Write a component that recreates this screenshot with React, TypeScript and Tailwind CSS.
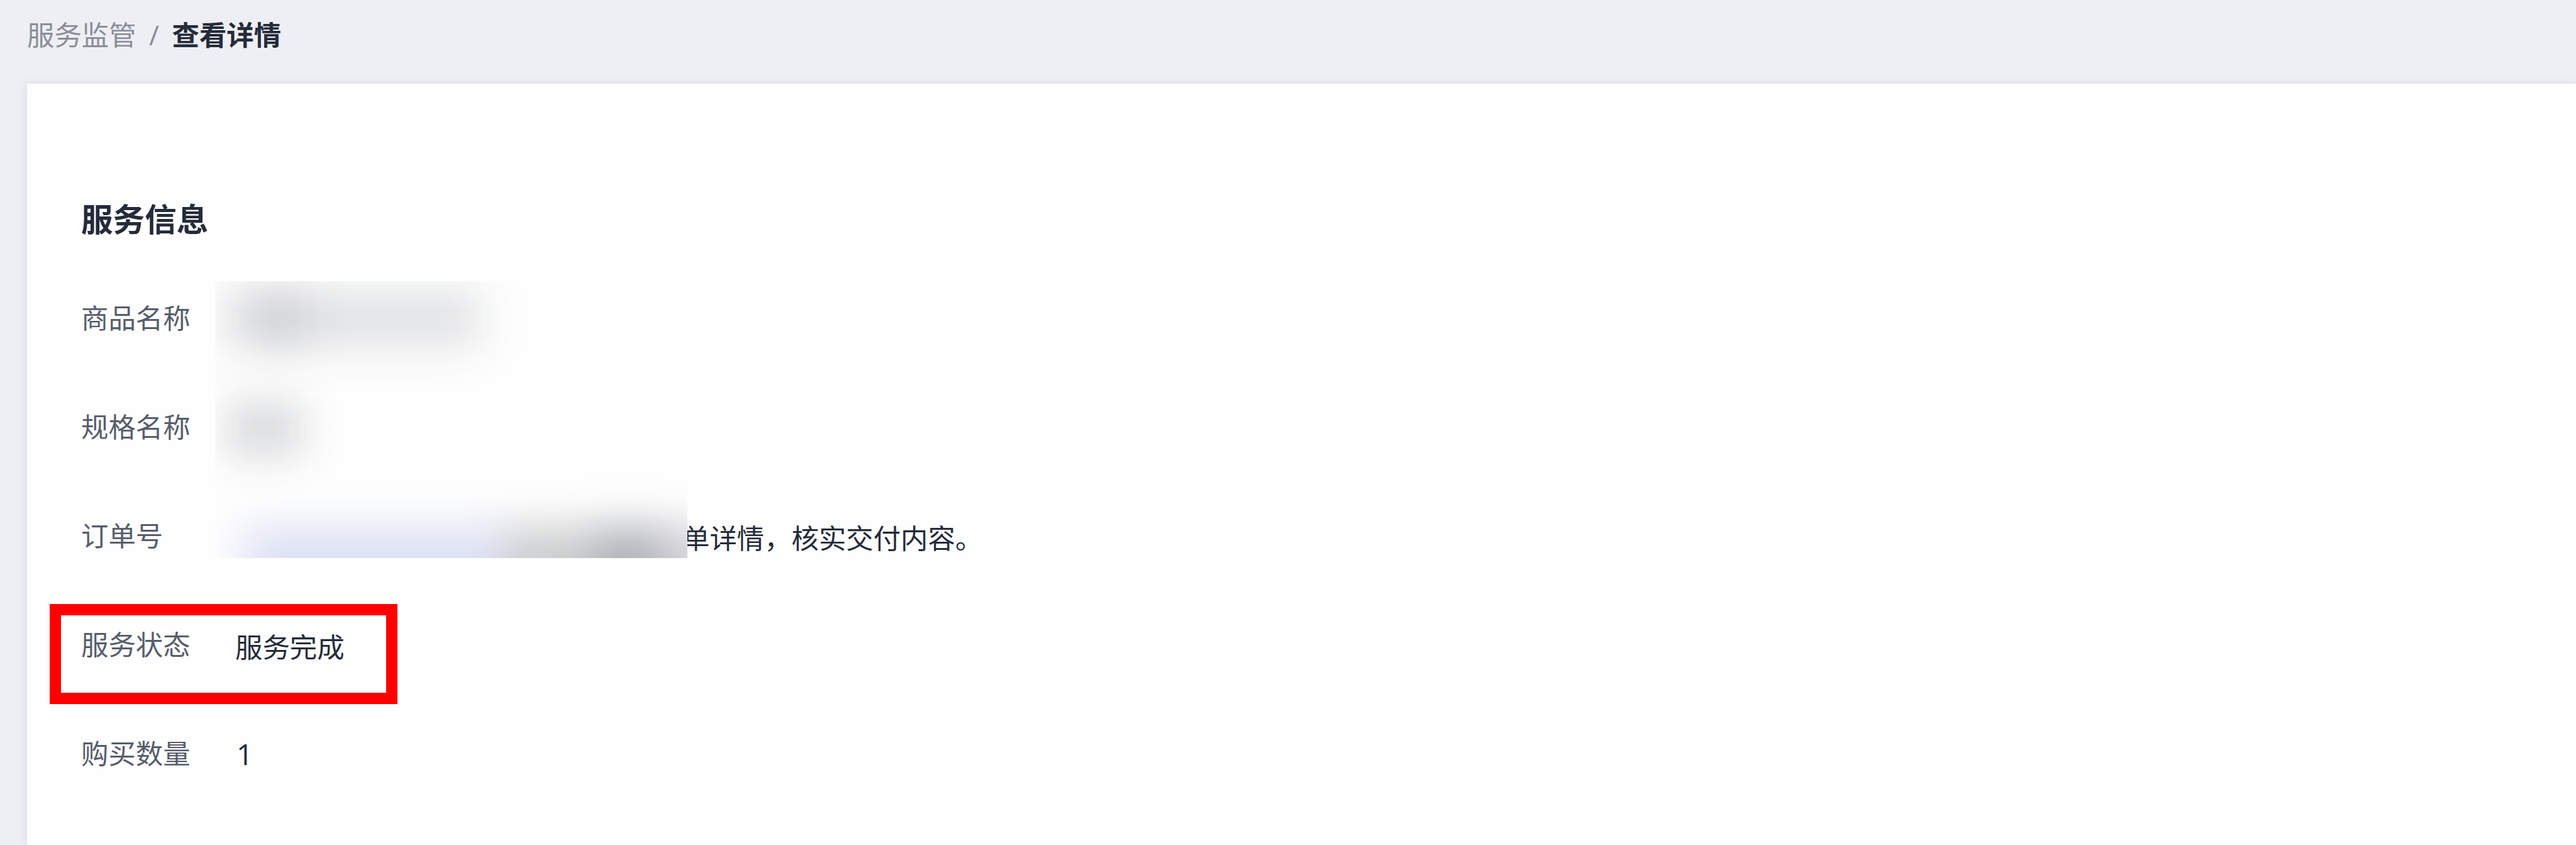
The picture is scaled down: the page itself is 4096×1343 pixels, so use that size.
type RowProps = {
  label: string
  value?: string
  valueClass?: string
}

const rows: RowProps[] = [
  { label: '商品名称' },
  { label: '规格名称' },
  { label: '订单号', value: '单详情，核实交付内容。', valueClass: 'pt-[4px] pl-[711px]' },
  { label: '服务状态', value: '服务完成', valueClass: 'pt-[4px]' },
  { label: '购买数量', value: '1', valueClass: 'pl-[2px] text-[46px]' },
]

function Breadcrumb() {
  return (
    <nav className="flex h-[133px] items-start pt-[26px] pl-[43px] text-[43.4px] leading-[60px]">
      <span className="text-[#8a8e99]">服务监管</span>
      <span className="w-[57px] text-center text-[#8a8e99]">/</span>
      <span className="font-bold text-[#252b3a]">查看详情</span>
    </nav>
  )
}

// hides the private values of the first three rows
function Mosaic() {
  return (
    <div className="absolute top-[314px] left-[299px] flex h-[440px] w-[751px] flex-col overflow-hidden bg-[#fefefe]">
      <div className="flex h-[189px] shrink-0 pt-[12px] pl-[12px] blur-[34px]">
        <div className="h-[94px] w-[48px] bg-[#1a2030]/12" />
        <div className="h-[94px] w-[86px] bg-[#1a2030]/21" />
        <div className="h-[94px] w-[276px] bg-[#1a2030]/12" />
      </div>
      <div className="flex h-[200px] shrink-0 pl-[16px] blur-[31px]">
        <div className="h-[92px] w-[125px] bg-[#1a2030]/15" />
      </div>
      <div className="flex h-[140px] shrink-0 pl-[45px] blur-[32px]">
        <div className="w-[415px] shrink-0 bg-[#dde1f3]" />
        <div className="w-[140px] shrink-0 bg-[#cdcecf]" />
        <div className="w-[115px] shrink-0 bg-[#b2b4ba]" />
        <div className="w-[120px] shrink-0 bg-[#d6d6db]" />
      </div>
    </div>
  )
}

function Row({ label, value, valueClass }: RowProps) {
  return (
    <div className="flex h-[173.1px] items-start">
      <div className="w-[245px] text-[#575d6c]">{label}</div>
      {value && <div className={`text-[#252b3a] ${valueClass}`}>{value}</div>}
    </div>
  )
}

export default function App() {
  return (
    <div className="flex h-[1343px] w-full flex-col overflow-hidden bg-[#eeeff4] font-['Open_Sans','Noto_Sans_CJK_SC',sans-serif]">
      <Breadcrumb />
      <div className="relative ml-[43px] flex-1 bg-[#fefefe] pt-[181px] pl-[86px] shadow-[0_0_14px_rgba(37,43,58,0.1)]">
        <h2 className="h-[162px] text-[50.6px] leading-[70px] font-bold text-[#252b3a]">服务信息</h2>
        <div className="text-[43.4px] leading-[60px]">
          {rows.map((row) => (
            <Row key={row.label} {...row} />
          ))}
        </div>
        <Mosaic />
        {/* status highlight */}
        <div className="absolute top-[827px] left-[36px] h-[159px] w-[553px] border-[18px] border-[#ff0000]" />
      </div>
    </div>
  )
}
